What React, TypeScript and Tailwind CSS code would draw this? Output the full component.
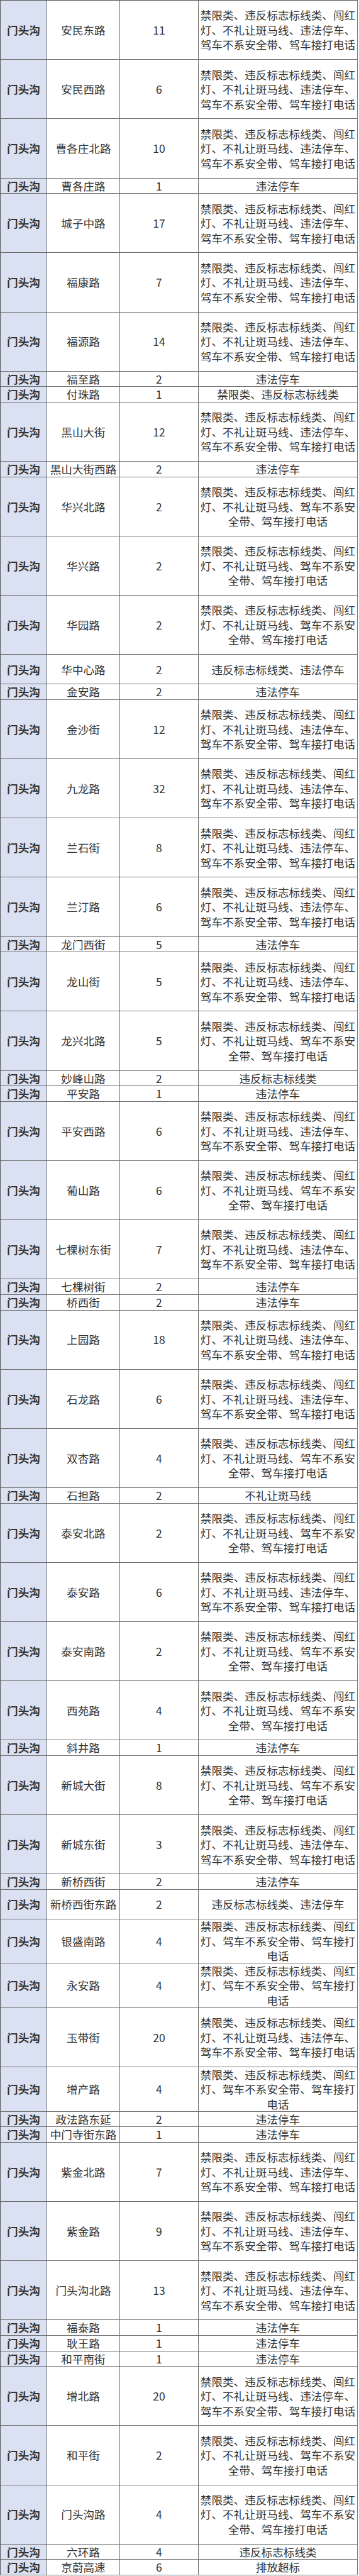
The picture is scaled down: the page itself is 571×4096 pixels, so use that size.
import React from "react";

const A = ["禁限类、违反标志标线类、闯红", "灯、不礼让斑马线、违法停车、", "驾车不系安全带、驾车接打电话"];
const B = ["禁限类、违反标志标线类、闯红", "灯、不礼让斑马线、驾车不系安", "全带、驾车接打电话"];
const C = ["禁限类、违反标志标线类、闯红", "灯、驾车不系安全带、驾车接打", "电话"];

type Kind = "h3" | "h1" | "h2" | "hc";
type Row = { road: string; n: string; lines: string[]; kind: Kind };

const P = ["违法停车"];

const rows: Row[] = [
  { road: "安民东路", n: "11", lines: A, kind: "h3" },
  { road: "安民西路", n: "6", lines: A, kind: "h3" },
  { road: "曹各庄北路", n: "10", lines: A, kind: "h3" },
  { road: "曹各庄路", n: "1", lines: P, kind: "h1" },
  { road: "城子中路", n: "17", lines: A, kind: "h3" },
  { road: "福康路", n: "7", lines: A, kind: "h3" },
  { road: "福源路", n: "14", lines: A, kind: "h3" },
  { road: "福至路", n: "2", lines: P, kind: "h1" },
  { road: "付珠路", n: "1", lines: ["禁限类、违反标志标线类"], kind: "h1" },
  { road: "黑山大街", n: "12", lines: A, kind: "h3" },
  { road: "黑山大街西路", n: "2", lines: P, kind: "h1" },
  { road: "华兴北路", n: "2", lines: B, kind: "h3" },
  { road: "华兴路", n: "2", lines: B, kind: "h3" },
  { road: "华园路", n: "2", lines: B, kind: "h3" },
  { road: "华中心路", n: "2", lines: ["违反标志标线类、违法停车"], kind: "h2" },
  { road: "金安路", n: "2", lines: P, kind: "h1" },
  { road: "金沙街", n: "12", lines: A, kind: "h3" },
  { road: "九龙路", n: "32", lines: A, kind: "h3" },
  { road: "兰石街", n: "8", lines: A, kind: "h3" },
  { road: "兰汀路", n: "6", lines: A, kind: "h3" },
  { road: "龙门西街", n: "5", lines: P, kind: "h1" },
  { road: "龙山街", n: "5", lines: A, kind: "h3" },
  { road: "龙兴北路", n: "5", lines: B, kind: "h3" },
  { road: "妙峰山路", n: "2", lines: ["违反标志标线类"], kind: "h1" },
  { road: "平安路", n: "1", lines: P, kind: "h1" },
  { road: "平安西路", n: "6", lines: A, kind: "h3" },
  { road: "葡山路", n: "6", lines: B, kind: "h3" },
  { road: "七棵树东街", n: "7", lines: A, kind: "h3" },
  { road: "七棵树街", n: "2", lines: P, kind: "h1" },
  { road: "桥西街", n: "2", lines: P, kind: "h1" },
  { road: "上园路", n: "18", lines: A, kind: "h3" },
  { road: "石龙路", n: "6", lines: A, kind: "h3" },
  { road: "双杏路", n: "4", lines: B, kind: "h3" },
  { road: "石担路", n: "2", lines: ["不礼让斑马线"], kind: "h1" },
  { road: "泰安北路", n: "2", lines: B, kind: "h3" },
  { road: "泰安路", n: "6", lines: A, kind: "h3" },
  { road: "泰安南路", n: "2", lines: B, kind: "h3" },
  { road: "西苑路", n: "4", lines: B, kind: "h3" },
  { road: "斜井路", n: "1", lines: P, kind: "h1" },
  { road: "新城大街", n: "8", lines: B, kind: "h3" },
  { road: "新城东街", n: "3", lines: A, kind: "h3" },
  { road: "新桥西街", n: "2", lines: P, kind: "h1" },
  { road: "新桥西街东路", n: "2", lines: ["违反标志标线类、违法停车"], kind: "h2" },
  { road: "银盛南路", n: "4", lines: C, kind: "hc" },
  { road: "永安路", n: "4", lines: C, kind: "hc" },
  { road: "玉带街", n: "20", lines: A, kind: "h3" },
  { road: "增产路", n: "4", lines: C, kind: "hc" },
  { road: "政法路东延", n: "2", lines: P, kind: "h1" },
  { road: "中门寺街东路", n: "1", lines: P, kind: "h1" },
  { road: "紫金北路", n: "7", lines: A, kind: "h3" },
  { road: "紫金路", n: "9", lines: A, kind: "h3" },
  { road: "门头沟北路", n: "13", lines: A, kind: "h3" },
  { road: "福泰路", n: "1", lines: P, kind: "h1" },
  { road: "耿王路", n: "1", lines: P, kind: "h1" },
  { road: "和平南街", n: "1", lines: P, kind: "h1" },
  { road: "增北路", n: "20", lines: A, kind: "h3" },
  { road: "和平街", n: "2", lines: B, kind: "h3" },
  { road: "门头沟路", n: "4", lines: B, kind: "h3" },
  { road: "六环路", n: "4", lines: ["违反标志标线类"], kind: "h1" },
  { road: "京蔚高速", n: "6", lines: ["排放超标"], kind: "h1" },
];

const heightClass: Record<Kind, string> = {
  h3: "h-[94.2px]",
  h1: "h-[24.6px]",
  h2: "h-[47px]",
  hc: "h-[70.5px]",
};

const cell = "border-r border-[#6e6e6e] flex items-center justify-center overflow-hidden";

export default function App() {
  return (
    <div
      className="bg-white w-[571px] text-[#333333] text-[17.6px] leading-[23.5px]"
      style={{ fontFamily: '"Noto Sans CJK SC", "Noto Sans", sans-serif' }}
    >
      <div className="w-[569px] border-l border-t border-[#5a5a5a]">
        {rows.map((r, i) => (
          <div
            key={i}
            className={`grid grid-cols-[74px_116px_125px_253px] border-b border-[#6e6e6e] ${heightClass[r.kind]}`}
          >
            <div className={`${cell} bg-[#d9e1f2] border-[#3a3a3a] font-bold`}>门头沟</div>
            <div className={`${cell} whitespace-nowrap`}>{r.road}</div>
            <div className={cell}>{r.n}</div>
            <div className={`${cell} flex-col text-center`}>
              {r.lines.map((l, j) => (
                <div key={j} className="whitespace-nowrap">
                  {l}
                </div>
              ))}
            </div>
          </div>
        ))}
      </div>
    </div>
  );
}
